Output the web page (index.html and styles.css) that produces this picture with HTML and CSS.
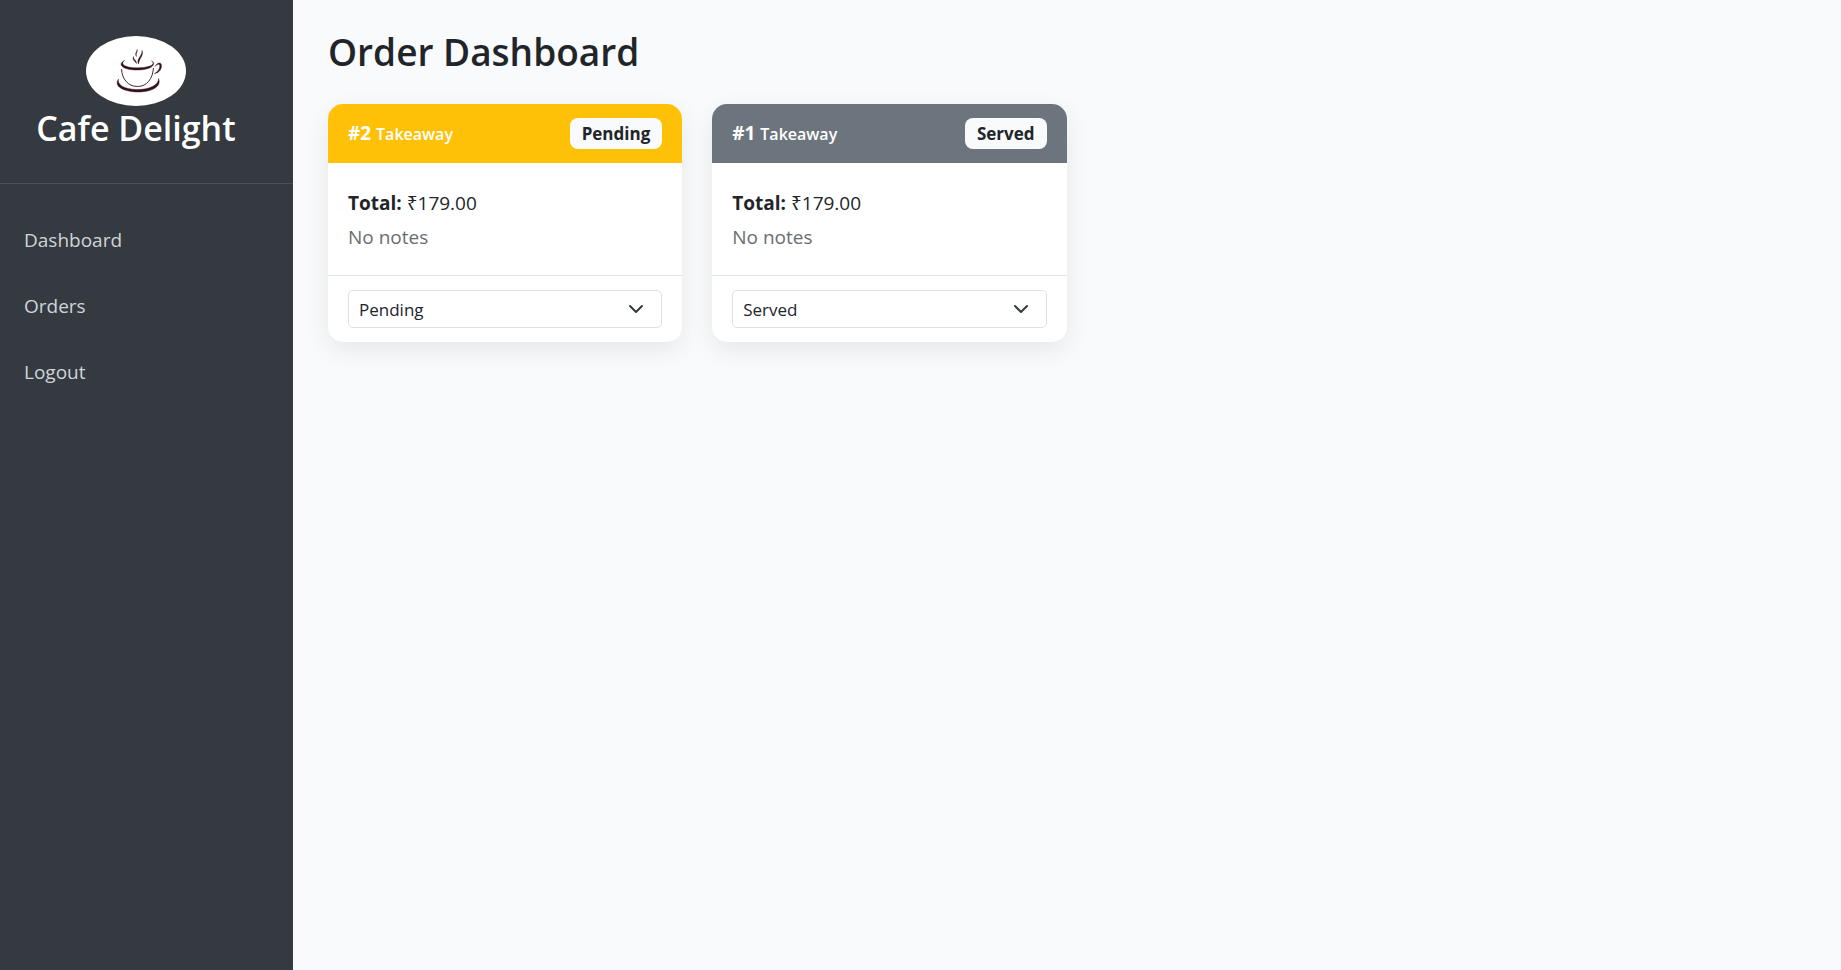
FILE: index.html
```
<!DOCTYPE html>
<html lang="en">
<head>
    <meta charset="UTF-8">
    <meta name="viewport" content="width=device-width, initial-scale=1.0">
    <title>Order Dashboard</title>
    <link rel="stylesheet" href="styles.css">
</head>
<body>

<div class="sidebar">
    <div class="sidebar-header">
        <svg class="logo" viewBox="0 0 100 70" aria-hidden="true">
            <ellipse cx="50" cy="35" rx="50" ry="35" fill="#fff"/>
            <g fill="#35101c" stroke="#35101c" stroke-width="0.400">
                <!-- steam -->
                <path d="M56 14.500C58 19 53.500 22 52.500 28C49.800 23 56.500 20 56 14.500Z"/>
                <path d="M51.300 13.500C51.500 16 49.500 17.500 50.500 20.500C48.600 18 50.500 16 51.300 13.500Z"/>
                <path d="M47.500 20.500C47 23.500 50.500 24 50.500 27.500C49 25 46 24 47.500 20.500Z"/>
                <!-- rim -->
                <path d="M38.500 24.500C31 28 36 34 51 34C66 34 71 28 65.500 24.800C70.500 28.500 63 31.800 51.500 31.800C40 31.800 33.500 28.500 38.500 24.500Z"/>
                <!-- saucer -->
                <path d="M32.500 43C27 51 39 56 52 56C66 56 76 50.500 72.500 42.500C73 49 63 53.500 52 53.500C41 53.500 31 50 32.500 43Z"/>
                <!-- handle -->
                <path d="M69 30.500C71 26 76 25.500 75.500 30.500C75.300 34 72 37.500 68.500 37.500C72 35.500 73.700 33 73.800 30C73.800 27.500 71 28 69 30.500Z"/>
            </g>
            <path d="M35.500 33C36 43 42 50.500 51.500 50.500C61 50.500 66.500 43 67.500 32" fill="none" stroke="#35101c" stroke-width="0.900"/>
        </svg>
        <h3>Cafe Delight</h3>
    </div>
    <ul class="sidebar-nav">
        <li><a href="#">Dashboard</a></li>
        <li><a href="#">Orders</a></li>
        <li><a href="#">Logout</a></li>
    </ul>
</div>

<div class="content">
    <h2>Order Dashboard</h2>
    <div class="orders">
        <div class="card">
            <div class="card-header pending">
                <div><strong>#2</strong> <small>Takeaway</small></div>
                <span class="badge">Pending</span>
            </div>
            <div class="card-body">
                <p><strong>Total:</strong> ₹179.00</p>
                <p class="notes">No notes</p>
            </div>
            <div class="card-footer">
                <select name="status" aria-label="Status of order 2">
                    <option selected>Pending</option>
                    <option>Served</option>
                </select>
            </div>
        </div>
        <div class="card">
            <div class="card-header served">
                <div><strong>#1</strong> <small>Takeaway</small></div>
                <span class="badge">Served</span>
            </div>
            <div class="card-body">
                <p><strong>Total:</strong> ₹179.00</p>
                <p class="notes">No notes</p>
            </div>
            <div class="card-footer">
                <select name="status" aria-label="Status of order 1">
                    <option>Pending</option>
                    <option selected>Served</option>
                </select>
            </div>
        </div>
    </div>
</div>

</body>
</html>
```
FILE: styles.css
```
* {
    box-sizing: border-box;
}
body {
    font-family: "Open Sans", "Noto Sans", sans-serif;
    font-size: 19px;
    line-height: 30px;
    color: #212529;
    margin: 0;
    display: flex;
    min-height: 100vh;
    background-color: #f8fafc;
}
.sidebar {
    flex: 0 0 293px;
    background-color: #343a40;
}
.sidebar-header {
    padding: 36px 21px 32px 0;
    text-align: center;
    border-bottom: 1px solid #4b5157;
}
.logo {
    display: block;
    width: 100px;
    height: 70px;
    margin: 0 auto;
}
h2, h3 {
    margin: 0;
    font-weight: 600;
}
.sidebar-header h3 {
    color: #fff;
    font-size: 34px;
    line-height: 45px;
}
.sidebar-nav {
    list-style: none;
    margin: 0;
    padding: 23px 0;
}
.sidebar-nav a {
    display: block;
    padding: 18px 24px;
    color: #cfd4da;
    text-decoration: none;
}
.content {
    flex: 1;
    padding: 28px 6px 28px 35px;
}
.content h2 {
    font-size: 37px;
    line-height: 48px;
    margin-bottom: 28px;
}
.orders {
    display: grid;
    grid-template-columns: repeat(4, 1fr);
    gap: 30px;
}
.card {
    background-color: #fff;
    border-radius: 15px;
    box-shadow: 0 8px 24px rgba(0, 0, 0, 0.08);
    overflow: hidden;
}
.card-header {
    display: flex;
    justify-content: space-between;
    align-items: center;
    padding: 14px 20px;
    color: #fff;
    font-weight: 600;
}
.card-header small {
    font-size: 16px;
}
.card-header.pending {
    background-color: #ffc107;
}
.card-header.served {
    background-color: #6c757d;
}
strong {
    font-weight: 700;
}
.badge {
    background-color: #f8fafc;
    color: #212529;
    font-size: 17px;
    font-weight: 700;
    line-height: 31px;
    padding: 0 12px;
    border-radius: 8px;
}
.card-body {
    padding: 25px 20px 19px;
}
.card-body p {
    margin: 0 0 4px;
}
.card-body .notes {
    color: #6a6d70;
}
.card-footer {
    padding: 14px 20px;
    border-top: 1px solid #e2e4e6;
}
select {
    display: block;
    width: 100%;
    height: 38px;
    padding: 0 44px 0 10px;
    font-family: inherit;
    font-size: 17px;
    color: #212529;
    border: 1px solid #dee2e6;
    border-radius: 5px;
    appearance: none;
    background: #fff url("data:image/svg+xml,%3csvg xmlns='http://www.w3.org/2000/svg' viewBox='0 0 16 16'%3e%3cpath fill='none' stroke='%23343a40' stroke-linecap='round' stroke-linejoin='round' stroke-width='2' d='m2 5 6 6 6-6'/%3e%3c/svg%3e") no-repeat right 17px center;
    background-size: 16px 16px;
}
```
